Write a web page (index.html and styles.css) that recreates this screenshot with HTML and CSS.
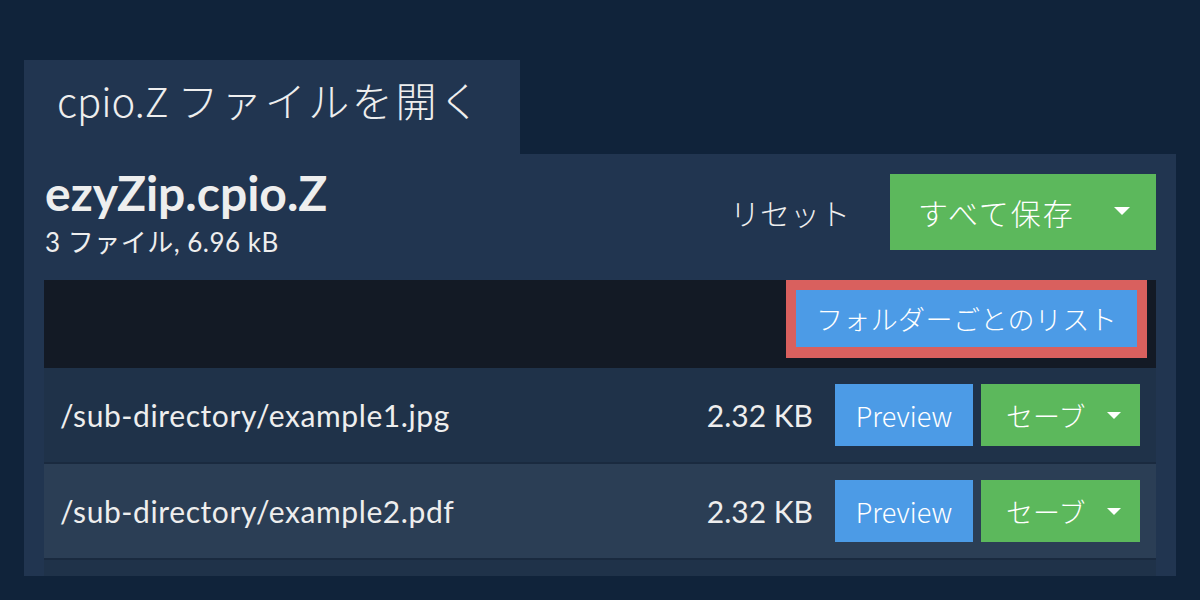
FILE: index.html
```html
<!DOCTYPE html>
<html lang="ja">
<head>
<meta charset="utf-8">
<title>cpio.Z ファイルを開く</title>
<link rel="stylesheet" href="styles.css">
</head>
<body>
<div class="page">
  <div class="tab">cpio.Z <span class="tab-ja">ファイルを開く</span></div>
  <div class="panel">
    <div class="header">
      <div class="info">
        <div class="title">ezyZip.cpio.Z</div>
        <div class="meta">3 ファイル, 6.96 kB</div>
      </div>
      <div class="actions">
        <span class="reset">リセット</span>
        <button class="btn btn-green btn-saveall"><span>すべて保存</span><span class="caret caret-lg"></span></button>
      </div>
    </div>
    <div class="toolbar">
      <div class="highlight"><button class="btn btn-blue btn-folder">フォルダーごとのリスト</button></div>
    </div>
    <div class="list">
      <div class="row">
        <span class="name">/sub-directory/example1.jpg</span>
        <span class="size">2.32 KB</span>
        <button class="btn btn-blue btn-preview">Preview</button>
        <button class="btn btn-green btn-save"><span>セーブ</span><span class="caret"></span></button>
      </div>
      <div class="row row-alt">
        <span class="name">/sub-directory/example2.pdf</span>
        <span class="size">2.32 KB</span>
        <button class="btn btn-blue btn-preview">Preview</button>
        <button class="btn btn-green btn-save"><span>セーブ</span><span class="caret"></span></button>
      </div>
    </div>
  </div>
</div>
</body>
</html>
```

FILE: styles.css
```css
* { box-sizing: border-box; }

html, body {
  margin: 0;
  padding: 0;
}

body {
  background: #10233a;
  color: #eeeeee;
  font-family: "Lato", "Noto Sans CJK JP", sans-serif;
  width: 1200px;
  height: 600px;
  overflow: hidden;
}

.page {
  padding: 60px 24px 0 24px;
}

.tab {
  width: 496px;
  height: 94px;
  background: #213550;
  padding: 19px 0 0 33px;
  font-family: "Noto Sans CJK JP", sans-serif;
  font-weight: 300;
  font-size: 40px;
  line-height: 40px;
  color: #eeeeee;
  white-space: nowrap;
}

.tab-ja {
  font-size: 41px;
  letter-spacing: 2.6px;
}

.panel {
  width: 1152px;
  background: #213550;
  padding: 20px 20px 0 20px;
}

.header {
  height: 76px;
  margin-bottom: 30px;
  display: flex;
  justify-content: space-between;
  align-items: flex-start;
}

.info {
  padding-left: 1px;
}

.title {
  margin-top: -5px;
  font-family: "Lato", sans-serif;
  font-weight: 700;
  font-size: 48px;
  line-height: 48px;
  color: #eeeeee;
}

.meta {
  margin-top: 12px;
  font-size: 26px;
  line-height: 26px;
  letter-spacing: 0.5px;
  color: #eeeeee;
}

.actions {
  display: flex;
  align-items: center;
  gap: 40px;
  height: 76px;
}

.reset {
  font-family: "Noto Sans CJK JP", sans-serif;
  font-size: 30px;
  font-weight: 300;
  color: #eeeeee;
}

.btn {
  border: 0;
  margin: 0;
  color: #ffffff;
  font-family: "Noto Sans CJK JP", sans-serif;
  font-weight: 300;
  cursor: pointer;
  display: flex;
  align-items: center;
}

.btn-green { background: #5cb85c; }
.btn-blue { background: #4c9be6; }

.btn-saveall {
  width: 266px;
  height: 76px;
  padding: 0 26px 0 28px;
  justify-content: space-between;
  font-size: 30px;
  letter-spacing: 2px;
}

.caret {
  width: 0;
  height: 0;
  border-left: 7px solid transparent;
  border-right: 7px solid transparent;
  border-top: 7px solid #ffffff;
}

.caret-lg {
  border-left-width: 8.5px;
  border-right-width: 8.5px;
  border-top-width: 8px;
  margin-top: -2px;
}

.toolbar {
  height: 88px;
  background: #131a25;
  display: flex;
  justify-content: flex-end;
  align-items: flex-start;
  padding-right: 9px;
}

.highlight {
  border: 10px solid #d9605e;
  border-bottom-width: 11px;
}

.btn-folder {
  width: 341px;
  height: 57px;
  justify-content: center;
  font-size: 27px;
  letter-spacing: 0.4px;
  padding: 0;
}

.list {
  background: #1f3249;
  padding-bottom: 16px;
}

.row {
  height: 96px;
  display: flex;
  align-items: center;
  padding: 0 16px;
  background: #1f3249;
  border-bottom: 2px solid #1a2a3f;
}

.row-alt {
  background: #2b3e55;
}

.name {
  flex: 1;
  font-family: "Lato", sans-serif;
  font-size: 30px;
  letter-spacing: 0.6px;
  color: #eeeeee;
}

.size {
  font-family: "Lato", sans-serif;
  font-size: 30px;
  color: #eeeeee;
  margin-right: 22px;
}

.btn-preview {
  width: 138px;
  height: 62px;
  justify-content: center;
  font-size: 27px;
  margin-right: 8px;
  padding: 0;
}

.btn-save {
  width: 159px;
  height: 62px;
  padding: 0 19px 0 25px;
  justify-content: space-between;
  font-size: 27px;
}
```
